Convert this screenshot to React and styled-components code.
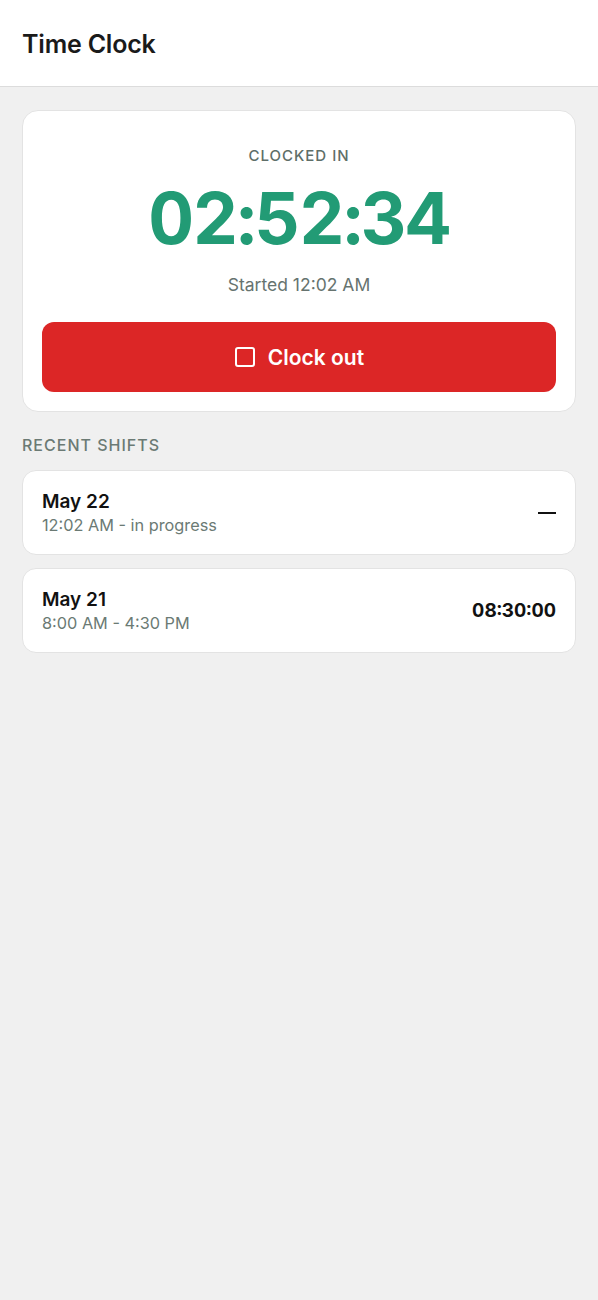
import React from "react";
import styled, { createGlobalStyle } from "styled-components";

const GlobalStyle = createGlobalStyle`
  html, body {
    margin: 0;
    padding: 0;
    background: #f0f0f0;
    font-family: Inter, "Liberation Sans", sans-serif;
    -webkit-font-smoothing: antialiased;
  }
  * {
    box-sizing: border-box;
  }
`;

const shifts = [
  { date: "May 22", range: "12:02 AM - in progress", total: null },
  { date: "May 21", range: "8:00 AM - 4:30 PM", total: "08:30:00" },
];

const StopIcon = () => (
  <svg width="22" height="22" viewBox="0 0 22 22" fill="none">
    <rect x="2" y="2" width="18" height="18" rx="2" stroke="#fff" strokeWidth="2" />
  </svg>
);

const App = () => {
  return (
    <Page>
      <GlobalStyle />
      <Header>
        <Title>Time Clock</Title>
      </Header>
      <Main>
        <ClockCard>
          <StatusLabel>CLOCKED IN</StatusLabel>
          <Timer>02:52:34</Timer>
          <Started>Started 12:02 AM</Started>
          <ClockButton>
            <StopIcon />
            Clock out
          </ClockButton>
        </ClockCard>

        <SectionLabel>RECENT SHIFTS</SectionLabel>
        <ShiftList>
          {shifts.map((s) => (
            <ShiftRow key={s.date}>
              <ShiftInfo>
                <ShiftDate>{s.date}</ShiftDate>
                <ShiftRange>{s.range}</ShiftRange>
              </ShiftInfo>
              {s.total ? <ShiftTotal>{s.total}</ShiftTotal> : <Dash />}
            </ShiftRow>
          ))}
        </ShiftList>
      </Main>
    </Page>
  );
};

export default App;

const Page = styled.div`
  min-height: 1300px;
  background: #f0f0f0;
`;

const Header = styled.header`
  height: 87px;
  background: #fff;
  border-bottom: 1px solid #dcdcdc;
  display: flex;
  align-items: center;
  padding: 2px 22px 0;
`;

const Title = styled.h1`
  margin: 0;
  font-size: 25px;
  font-weight: 600;
  color: #1a1a1a;
  letter-spacing: -0.2px;
`;

const Main = styled.main`
  padding: 23px 22px;
`;

const ClockCard = styled.section`
  background: #fff;
  border: 1px solid #e3e3e3;
  border-radius: 16px;
  padding: 34px 19px 19px;
  display: flex;
  flex-direction: column;
  align-items: center;
`;

const StatusLabel = styled.div`
  font-size: 15px;
  font-weight: 500;
  letter-spacing: 1px;
  color: #5e6e68;
  line-height: 22px;
`;

const Timer = styled.div`
  margin-top: 11px;
  font-size: 71px;
  font-weight: 700;
  color: #229b75;
  line-height: 80px;
  letter-spacing: -1.5px;
  font-variant-numeric: tabular-nums;
`;

const Started = styled.div`
  margin-top: 15px;
  font-size: 17.5px;
  color: #66736f;
  line-height: 24px;
`;

const ClockButton = styled.button`
  margin-top: 25px;
  width: 100%;
  height: 70px;
  border: none;
  border-radius: 12px;
  background: #dc2626;
  color: #fff;
  font-family: inherit;
  font-size: 21px;
  font-weight: 600;
  display: flex;
  align-items: center;
  justify-content: center;
  gap: 12px;
  cursor: pointer;
`;

const SectionLabel = styled.h2`
  margin: 23px 0 15px;
  font-size: 16px;
  font-weight: 500;
  letter-spacing: 1px;
  color: #6b7a74;
  line-height: 20px;
`;

const ShiftList = styled.div`
  display: flex;
  flex-direction: column;
  gap: 13px;
`;

const ShiftRow = styled.div`
  background: #fff;
  border: 1px solid #e3e3e3;
  border-radius: 14px;
  height: 85px;
  padding: 0 19px;
  display: flex;
  align-items: center;
  justify-content: space-between;
`;

const ShiftInfo = styled.div`
  display: flex;
  flex-direction: column;
`;

const ShiftDate = styled.div`
  font-size: 19px;
  font-weight: 600;
  color: #111;
  line-height: 24px;
`;

const ShiftRange = styled.div`
  font-size: 16.3px;
  color: #6b7a74;
  line-height: 22px;
`;

const ShiftTotal = styled.div`
  font-size: 19px;
  font-weight: 700;
  color: #111;
  font-variant-numeric: tabular-nums;
`;

const Dash = styled.span`
  width: 18px;
  height: 2px;
  background: #111;
`;
